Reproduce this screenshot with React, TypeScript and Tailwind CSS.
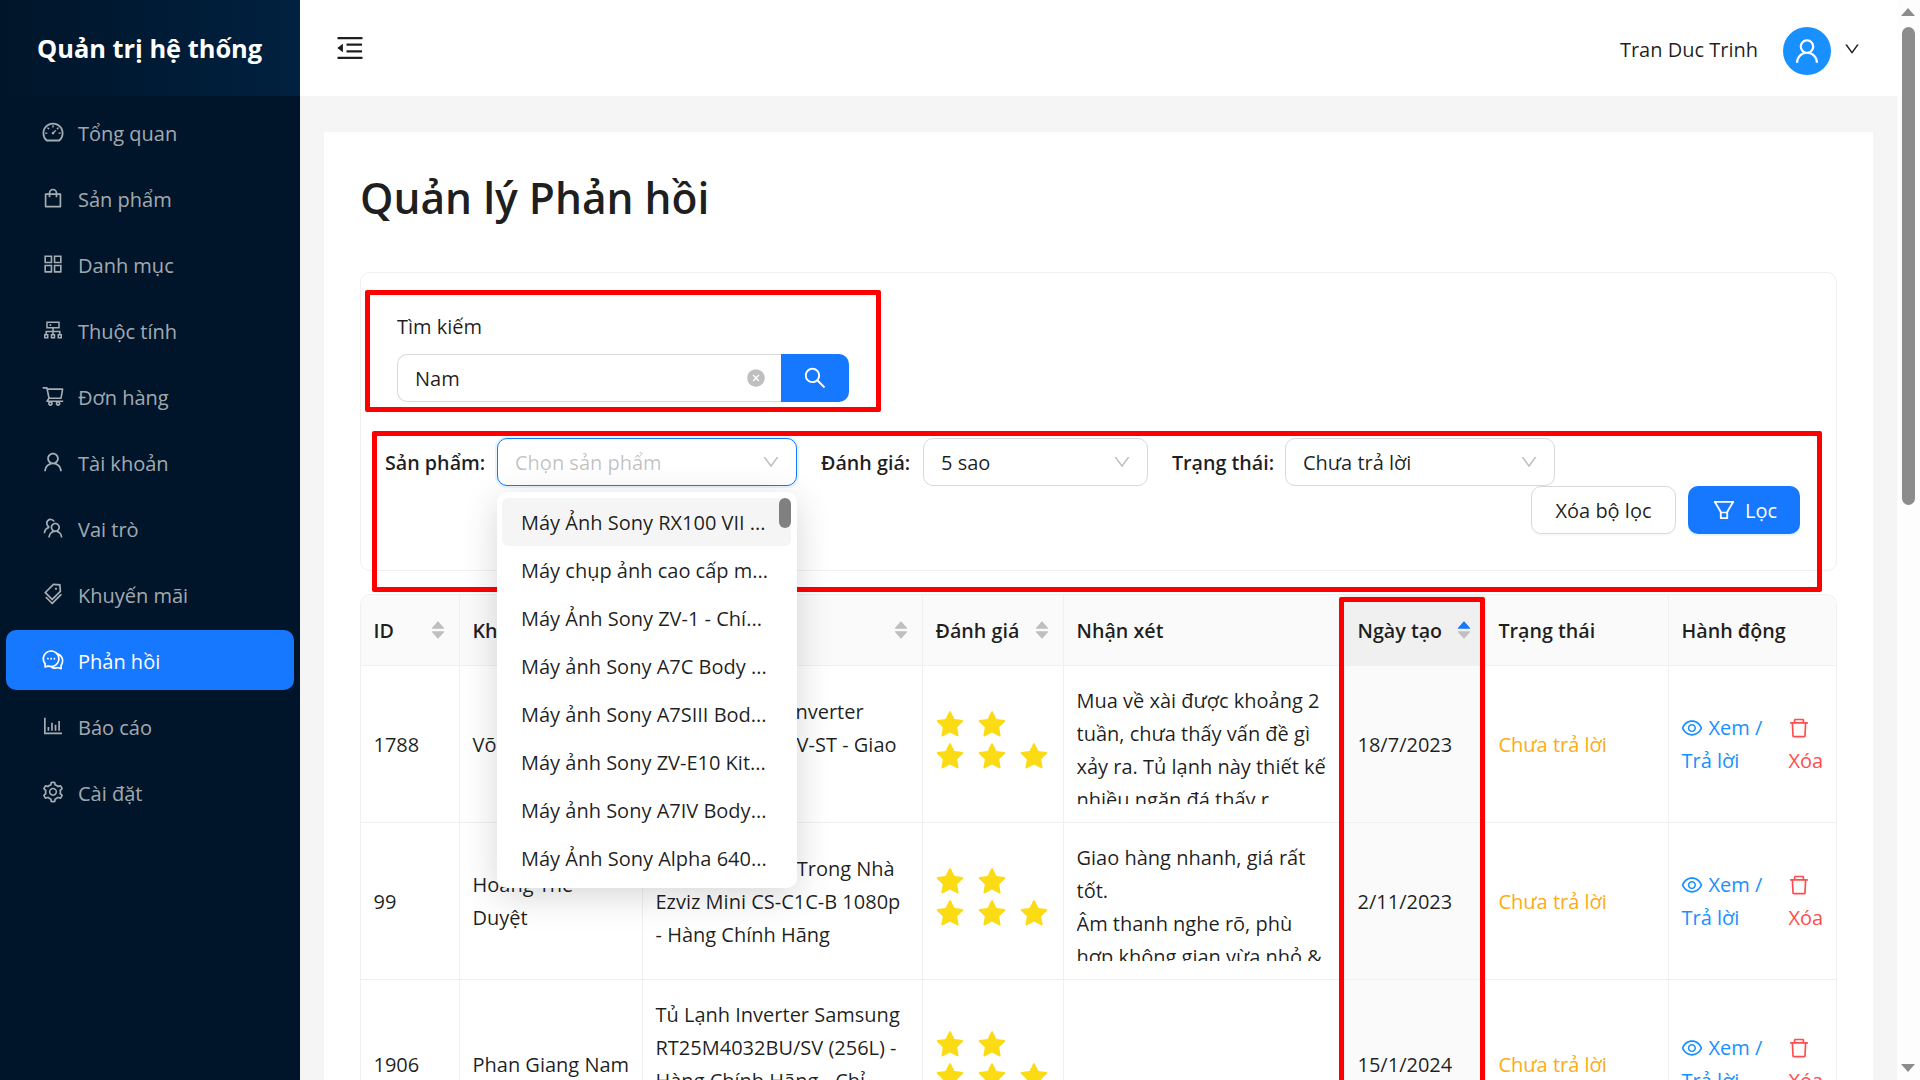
import React from "react";
import {
  AiOutlineDashboard, AiOutlineShopping, AiOutlineAppstore, AiOutlineCluster, AiOutlineShoppingCart,
  AiOutlineUser, AiOutlineTeam, AiOutlineTags, AiOutlineComment, AiOutlineBarChart, AiOutlineSetting,
  AiOutlineEye, AiOutlineDelete, AiOutlineFilter, AiOutlineSearch, AiOutlineDown, AiFillCloseCircle,
  AiOutlineMenuFold, AiFillStar, AiFillCaretUp, AiFillCaretDown,
} from "react-icons/ai";

const nav: [React.ComponentType<{ size?: number; className?: string }>, string][] = [
  [AiOutlineDashboard, "Tổng quan"],
  [AiOutlineShopping, "Sản phẩm"],
  [AiOutlineAppstore, "Danh mục"],
  [AiOutlineCluster, "Thuộc tính"],
  [AiOutlineShoppingCart, "Đơn hàng"],
  [AiOutlineUser, "Tài khoản"],
  [AiOutlineTeam, "Vai trò"],
  [AiOutlineTags, "Khuyến mãi"],
  [AiOutlineComment, "Phản hồi"],
  [AiOutlineBarChart, "Báo cáo"],
  [AiOutlineSetting, "Cài đặt"],
];

const options = [
  "Máy Ảnh Sony RX100 VII ...",
  "Máy chụp ảnh cao cấp m...",
  "Máy Ảnh Sony ZV-1 - Chí...",
  "Máy ảnh Sony A7C Body ...",
  "Máy ảnh Sony A7SIII Bod...",
  "Máy ảnh Sony ZV-E10 Kit...",
  "Máy ảnh Sony A7IV Body...",
  "Máy Ảnh Sony Alpha 640...",
];

function Sorter({ active }: { active?: boolean }) {
  return (
    <span className="flex flex-col items-center text-[#bfbfbf] leading-none">
      <AiFillCaretUp size={18} className={active ? "text-[#1677ff] -mb-[8px]" : "-mb-[8px]"} />
      <AiFillCaretDown size={18} />
    </span>
  );
}

function Star() {
  return <AiFillStar size={32} className="shrink-0" />;
}

function Stars() {
  return (
    <div className="flex flex-col text-[#fadb14] mb-[7px] -ml-[2px]">
      <div className="flex gap-[10px]"><Star /><Star /></div>
      <div className="flex gap-[10px]"><Star /><Star /><Star /></div>
    </div>
  );
}

function Th({ w, children, sort, active, last }: { w: number; children: React.ReactNode; sort?: boolean; active?: boolean; last?: boolean }) {
  return (
    <th
      style={{ width: w }}
      className={`h-[71px] px-[12.5px] text-left text-[19.7px] font-semibold border-b border-[#f0f0f0] ${last ? "" : "border-r"} ${active ? "bg-[#f0f0f0]" : "bg-[#fafafa]"}`}
    >
      <div className="flex items-center justify-between">
        <span>{children}</span>
        {sort && <Sorter active={active} />}
      </div>
    </th>
  );
}

function Td({ children, active, last }: { children?: React.ReactNode; active?: boolean; last?: boolean }) {
  return (
    <td className={`py-[18px] px-[12.5px] border-b border-[#f0f0f0] align-middle whitespace-nowrap ${last ? "" : "border-r"} ${active ? "bg-[#fafafa]" : ""}`}>
      {children}
    </td>
  );
}

function Row({ id, name, product, comment, date }: { id: string; name: React.ReactNode; product: React.ReactNode; comment?: React.ReactNode; date: string }) {
  return (
    <tr>
      <Td>{id}</Td>
      <Td>{name}</Td>
      <Td>{product}</Td>
      <Td><Stars /></Td>
      <Td>{comment && <div className="max-h-[120px] overflow-hidden">{comment}</div>}</Td>
      <Td active>{date}</Td>
      <Td><span className="text-[#faad14]">Chưa trả lời</span></Td>
      <Td last>
        <div className="flex justify-between">
          <div className="text-[#1890ff]">
            <div className="flex items-center gap-[5px] -ml-[2px]"><AiOutlineEye size={24} /><span>Xem /</span></div>
            <div>Trả lời</div>
          </div>
          <div className="text-[#ff4d4f] w-[36px]">
            <div className="h-[33px] flex items-center -ml-[2px]"><AiOutlineDelete size={24} /></div>
            <div>Xóa</div>
          </div>
        </div>
      </Td>
    </tr>
  );
}

function Select({ w, label, placeholder, focused, children }: { w: number; label: string; placeholder?: boolean; focused?: boolean; children?: React.ReactNode }) {
  return (
    <div style={{ width: w }} className="relative shrink-0">
      <div className={`h-[48px] rounded-[10px] border bg-white flex items-center justify-between pl-[17px] pr-[15px] ${focused ? "border-[#1677ff] shadow-[0_0_0_2px_rgba(5,145,255,0.1)]" : "border-[#d9d9d9]"}`}>
        <span className={placeholder ? "text-[#00000040]" : ""}>{label}</span>
        <AiOutlineDown size={20} className="text-[#00000040]" />
      </div>
      {children}
    </div>
  );
}

function Box({ x, y, w, h }: { x: number; y: number; w: number; h: number }) {
  return <div style={{ left: x, top: y, width: w, height: h }} className="absolute border-[5px] border-[#ff0000] rounded-[2px] pointer-events-none" />;
}

export default function App() {
  return (
    <div className="relative flex h-screen w-full overflow-hidden bg-white text-[20px] leading-[33px] text-[#000000e0] [font-family:'Open_Sans',sans-serif]">
      <aside className="w-[300px] shrink-0 bg-[#001529] text-[#ffffffa6]">
        <div className="h-[96px] flex items-center pl-[37px] text-[25.4px] font-bold text-white bg-gradient-to-r from-[#001529] to-[#002140]">Quản trị hệ thống</div>
        <nav className="mt-[3px]">
          {nav.map(([Icon, label]) => {
            const on = label === "Phản hồi";
            return (
              <div key={label} className="h-[66px] flex items-center">
                <div className={`mx-[6px] w-[288px] h-[60px] rounded-[10px] flex items-center pl-[35px] gap-[13px] ${on ? "bg-[#1677ff] text-white" : ""}`}>
                  <Icon size={24} className="shrink-0" />
                  <span className="pt-[2px]">{label}</span>
                </div>
              </div>
            );
          })}
        </nav>
      </aside>

      <div className="flex-1 min-w-0 flex flex-col">
        <header className="h-[96px] shrink-0 bg-white flex items-center justify-between pl-[34px] pr-[36px]">
          <AiOutlineMenuFold size={32} className="text-[#000000e0]" />
          <div className="flex items-center">
            <span className="pt-[2px]">Tran Duc Trinh</span>
            <div className="ml-[25px] w-[48px] h-[48px] rounded-full bg-[#1890ff] flex items-center justify-center mt-[6px]">
              <AiOutlineUser size={30} className="text-white" />
            </div>
            <AiOutlineDown size={18} className="ml-[12px] mt-[2px]" />
          </div>
        </header>
        <main className="flex-1 min-h-0 bg-[#f5f5f5] pt-[36px] pl-[24px] pr-[24px]">
          <div className="bg-white p-[36px] h-[2000px]">
            <h1 className="text-[42.5px] leading-[60px] font-semibold">Quản lý Phản hồi</h1>
            <section className="mt-[44px] h-[299px] border border-[#f0f0f0] rounded-[10px] relative">
              <div className="pt-[37px] pl-[36px]">
                <div>Tìm kiếm</div>
                <div className="mt-[11px] flex w-[452px] h-[48px]">
                  <div className="flex-1 border border-r-0 border-[#d9d9d9] rounded-l-[10px] flex items-center justify-between pl-[17px] pr-[15px]">
                    <span>Nam</span>
                    <AiFillCloseCircle size={20} className="text-[#00000040]" />
                  </div>
                  <div className="w-[68px] bg-[#1677ff] rounded-r-[10px] flex items-center justify-center text-white">
                    <AiOutlineSearch size={26} />
                  </div>
                </div>
              </div>
              <div className="mt-[36px] pl-[24px] flex items-center">
                <span className="w-[112px] shrink-0 text-[19.7px] font-semibold whitespace-nowrap">Sản phẩm:</span>
                <Select w={300} label="Chọn sản phẩm" placeholder focused>
                  <div className="absolute z-10 left-0 top-[54px] w-[300px] h-[396px] bg-white rounded-[10px] pl-[5px] pr-[6px] pt-[6px] shadow-[0_8px_36px_rgba(0,0,0,0.16)] overflow-hidden">
                    {options.map((o, i) => (
                      <div key={o} className={`h-[48px] flex items-center pl-[19px] rounded-[6px] whitespace-nowrap ${i === 0 ? "bg-[#f5f5f5]" : ""}`}>{o}</div>
                    ))}
                    <div className="absolute right-[6px] top-[6px] w-[12px] h-[30px] rounded-full bg-[#808080]" />
                  </div>
                </Select>
                <span className="w-[102px] ml-[24px] shrink-0 text-[19.7px] font-semibold whitespace-nowrap">Đánh giá:</span>
                <Select w={225} label="5 sao" />
                <span className="w-[113px] ml-[24px] shrink-0 text-[19.7px] font-semibold whitespace-nowrap">Trạng thái:</span>
                <Select w={270} label="Chưa trả lời" />
              </div>
              <div className="pr-[36px] flex justify-end gap-[12px]">
                <button className="w-[145px] h-[48px] border border-[#d9d9d9] rounded-[10px] bg-white shadow-[0_2px_0_rgba(0,0,0,0.02)]">Xóa bộ lọc</button>
                <button className="w-[112px] h-[48px] rounded-[10px] bg-[#1677ff] text-white flex items-center justify-center gap-[8px] shadow-[0_2px_0_rgba(5,145,255,0.1)]">
                  <AiOutlineFilter size={26} /><span>Lọc</span>
                </button>
              </div>
            </section>
            <div className="mt-[23px] border-t border-l border-r border-[#f0f0f0] rounded-t-[10px] overflow-hidden">
              <table className="table-fixed w-full border-separate border-spacing-0">
                <thead>
                  <tr>
                    <Th w={99} sort>ID</Th>
                    <Th w={183}>Khách hàng</Th>
                    <Th w={280} sort>Sản phẩm</Th>
                    <Th w={141} sort>Đánh giá</Th>
                    <Th w={281}>Nhận xét</Th>
                    <Th w={141} sort active>Ngày tạo</Th>
                    <Th w={183}>Trạng thái</Th>
                    <Th w={168} last>Hành động</Th>
                  </tr>
                </thead>
                <tbody>
                  <Row
                    id="1788"
                    name="Võ Văn Hùng"
                    product={<>Tủ lạnh Sharp Inverter<br />182 Lít, SJ-X201V-ST - Giao<br />toàn quốc</>}
                    comment={<>Mua về xài được khoảng 2<br />tuần, chưa thấy vấn đề gì<br />xảy ra. Tủ lạnh này thiết kế<br />nhiều ngăn đá thấy r</>}
                    date="18/7/2023"
                  />
                  <Row
                    id="99"
                    name={<>Hoàng Thế<br />Duyệt</>}
                    product={<>Camera IP Wifi Trong Nhà<br />Ezviz Mini CS-C1C-B 1080p<br />- Hàng Chính Hãng</>}
                    comment={<>Giao hàng nhanh, giá rất<br />tốt.<br />Âm thanh nghe rõ, phù<br />hợp không gian vừa nhỏ &amp;</>}
                    date="2/11/2023"
                  />
                  <Row
                    id="1906"
                    name="Phan Giang Nam"
                    product={<>Tủ Lạnh Inverter Samsung<br />RT25M4032BU/SV (256L) -<br />Hàng Chính Hãng - Chỉ<br />Giao tại Hà Nội</>}
                    date="15/1/2024"
                  />
                </tbody>
              </table>
            </div>
          </div>
        </main>
      </div>

      <div className="w-[23px] shrink-0 bg-[#fdfdfd] relative">
        <div className="absolute left-[5px] top-[27px] w-[13px] h-[478px] rounded-full bg-[#8c8c8c]" />
        <div className="absolute left-[4px] top-[8px] w-0 h-0 border-l-[7.5px] border-r-[7.5px] border-b-[8px] border-l-transparent border-r-transparent border-b-[#8c8c8c]" />
        <div className="absolute left-[4px] top-[1064px] w-0 h-0 border-l-[7.5px] border-r-[7.5px] border-t-[8px] border-l-transparent border-r-transparent border-t-[#8c8c8c]" />
      </div>

      <Box x={365} y={290} w={516} h={122} />
      <Box x={372} y={431} w={1450} h={161} />
      <Box x={1339} y={597} w={146} h={490} />
    </div>
  );
}
